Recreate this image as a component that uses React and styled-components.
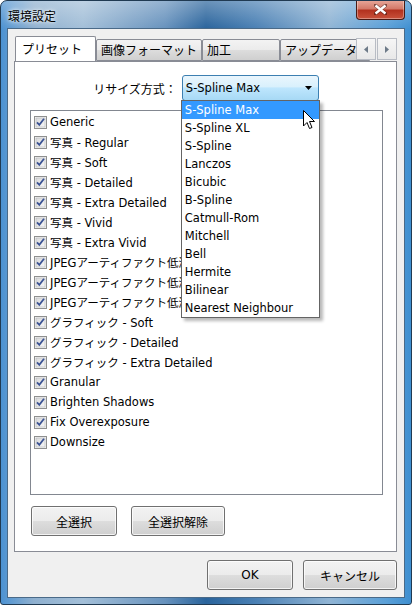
import React from "react";
import styled, { createGlobalStyle } from "styled-components";

const GlobalStyle = createGlobalStyle`
  html, body {
    margin: 0;
    padding: 0;
    background: #ffffff;
  }
  body {
    font-family: "DejaVu Sans", "Noto Sans CJK JP", sans-serif;
    font-size: 11.5px;
  }
`;

const Window = styled.div`
  box-sizing: border-box;
  width: 412px;
  height: 605px;
  border: 1px solid #203a52;
  border-radius: 7px 7px 3px 3px;
  padding: 0 6px 6px 6px;
  display: flex;
  flex-direction: column;
  background:
    linear-gradient(180deg, rgba(255,255,255,0.3) 0%, rgba(255,255,255,0) 28px),
    linear-gradient(90deg, #4c92d2 0%, #8fb0cf 8%, #a3bfd8 20%, #6792bd 40%, #2a649c 50%, #4a80b4 62%, #90b4d4 80%, #5aa0d8 94%, #3f8fd0 100%);
  overflow: hidden;
`;

const TitleBar = styled.div`
  height: 27px;
  display: flex;
  align-items: flex-start;
  justify-content: space-between;
  flex-shrink: 0;
`;

const Title = styled.span`
  margin: 8px 0 0 1px;
  font-family: "Noto Sans CJK JP", sans-serif;
  font-size: 12px;
  line-height: 14px;
  color: #000;
  text-shadow: 0 0 6px rgba(255,255,255,0.9), 0 0 3px rgba(255,255,255,0.9);
`;

const CloseButton = styled.div`
  width: 47px;
  height: 19px;
  margin-top: -1px;
  border: 1px solid #4a1a14;
  border-top: none;
  border-radius: 0 0 4px 4px;
  background: linear-gradient(180deg, #e9a99c 0%, #d47a6a 45%, #b3321f 55%, #c9523b 100%);
  box-shadow: inset 0 0 0 1px rgba(255,255,255,0.35);
  display: flex;
  align-items: center;
  justify-content: center;
`;

const Client = styled.div`
  flex: 1;
  display: flex;
  flex-direction: column;
  border: 1px solid #4a6a88;
  background: #f0f0f0;
`;

const TabControl = styled.div`
  margin: 7px 7px 0 6px;
  display: flex;
  flex-direction: column;
`;

const TabStrip = styled.div`
  position: relative;
  height: 25px;
  display: flex;
  align-items: flex-end;
  overflow: hidden;
`;

const Tab = styled.div`
  box-sizing: border-box;
  flex-shrink: 0;
  height: ${(p) => (p.$active ? "26px" : "22px")};
  width: ${(p) => p.$w}px;
  margin-left: ${(p) => (p.$active ? "1px" : "0")};
  margin-bottom: ${(p) => (p.$active ? "-1px" : "0")};
  border: 1px solid #898c95;
  border-bottom: ${(p) => (p.$active ? "none" : "1px solid #898c95")};
  border-radius: 2px 2px 0 0;
  background: ${(p) =>
    p.$active ? "#ffffff" : "linear-gradient(180deg, #f3f3f3 0%, #ebebeb 50%, #dddddd 51%, #cfcfcf 100%)"};
  padding: ${(p) => (p.$active ? "4px 0 0 6px" : "2px 0 0 4px")};
  font-family: "Noto Sans CJK JP", sans-serif;
  font-size: 12px;
  line-height: 16px;
  white-space: nowrap;
  overflow: hidden;
  color: #000;
  position: relative;
  z-index: ${(p) => (p.$active ? 1 : 0)};
`;

const ScrollButtons = styled.div`
  position: absolute;
  right: 0;
  top: 2px;
  display: flex;
  gap: 1px;
  z-index: 2;
`;

const ScrollButton = styled.div`
  box-sizing: border-box;
  width: 20px;
  height: 22px;
  border: 1px solid #b8bcc4;
  background: linear-gradient(180deg, #f6f6f6 0%, #e8e8e8 100%);
  display: flex;
  align-items: center;
  justify-content: center;
`;

const Panel = styled.div`
  box-sizing: border-box;
  height: 491px;
  border: 1px solid #898c95;
  background: #ffffff;
  display: flex;
  flex-direction: column;
  padding: 13px 13px 0 15px;
`;

const ResizeRow = styled.div`
  display: flex;
  justify-content: center;
  align-items: center;
  gap: 5px;
  margin-left: -1px;
`;

const Label = styled.span`
  font-family: "Noto Sans CJK JP", sans-serif;
  font-size: 12px;
  color: #000;
`;

const ComboWrap = styled.div`
  position: relative;
`;

const Combo = styled.div`
  box-sizing: border-box;
  width: 137px;
  height: 26px;
  border: 1px solid #3c7fb1;
  border-radius: 3px;
  background: linear-gradient(180deg, #eaf6fd 0%, #d9f0fc 45%, #bee6fd 50%, #a7d9f5 100%);
  display: flex;
  align-items: center;
  justify-content: space-between;
  padding: 0 6px 0 3px;
  color: #000;
`;

const Dropdown = styled.div`
  position: absolute;
  top: 25px;
  left: -1px;
  width: 139px;
  box-sizing: border-box;
  border: 1px solid #646464;
  background: #ffffff;
  box-shadow: 3px 3px 3px rgba(0, 0, 0, 0.28);
  z-index: 5;
`;

const Option = styled.div`
  height: 18px;
  line-height: 18px;
  padding-left: 3px;
  white-space: nowrap;
  background: ${(p) => (p.$selected ? "#3399ff" : "transparent")};
  color: ${(p) => (p.$selected ? "#ffffff" : "#000000")};
`;

const Cursor = styled.svg`
  position: absolute;
  left: 121px;
  top: 9px;
`;

const ListBox = styled.div`
  box-sizing: border-box;
  width: 353px;
  height: 385px;
  margin-top: 9px;
  border: 1px solid #828790;
  padding: 1px 0 0 3px;
  display: flex;
  flex-direction: column;
`;

const Item = styled.div`
  height: 20px;
  display: flex;
  align-items: center;
  gap: 3px;
  white-space: nowrap;
  color: #000;
`;

const ButtonRow = styled.div`
  display: flex;
  gap: 14px;
  margin-top: 11px;
  padding-left: 1px;
`;

const Button = styled.div`
  box-sizing: border-box;
  width: ${(p) => p.$w}px;
  height: 30px;
  border: 1px solid #707070;
  border-radius: 3px;
  background: linear-gradient(180deg, #f2f2f2 0%, #ebebeb 50%, #dddddd 51%, #cfcfcf 100%);
  box-shadow: inset 0 0 0 1px rgba(255, 255, 255, 0.75);
  display: flex;
  align-items: center;
  justify-content: center;
  font-family: "DejaVu Sans", "Noto Sans CJK JP", sans-serif;
  font-size: 12px;
  color: #000;
`;

const Footer = styled.div`
  display: flex;
  justify-content: flex-end;
  gap: 10px;
  margin: 8px 7px 0 0;
`;

const tabs = [
  { label: "プリセット", w: 81, active: true },
  { label: "画像フォーマット", w: 106 },
  { label: "加工", w: 78 },
  { label: "アップデータ", w: 90 },
];

const items = [
  "Generic",
  "写真 - Regular",
  "写真 - Soft",
  "写真 - Detailed",
  "写真 - Extra Detailed",
  "写真 - Vivid",
  "写真 - Extra Vivid",
  "JPEGアーティファクト低減 - Soft",
  "JPEGアーティファクト低減 - Regular",
  "JPEGアーティファクト低減 - Strong",
  "グラフィック - Soft",
  "グラフィック - Detailed",
  "グラフィック - Extra Detailed",
  "Granular",
  "Brighten Shadows",
  "Fix Overexposure",
  "Downsize",
];

const options = [
  "S-Spline Max",
  "S-Spline XL",
  "S-Spline",
  "Lanczos",
  "Bicubic",
  "B-Spline",
  "Catmull-Rom",
  "Mitchell",
  "Bell",
  "Hermite",
  "Bilinear",
  "Nearest Neighbour",
];

function CheckBox() {
  return (
    <svg width="13" height="13" viewBox="0 0 13 13">
      <defs>
        <linearGradient id="cbfill" x1="0" y1="0" x2="1" y2="1">
          <stop offset="0" stopColor="#d8d9db" />
          <stop offset="1" stopColor="#f7f7f7" />
        </linearGradient>
      </defs>
      <rect x="0.5" y="0.5" width="12" height="12" fill="#f4f4f4" stroke="#8e8f8f" />
      <rect x="2" y="2" width="9" height="9" fill="url(#cbfill)" stroke="#b2b4b8" strokeWidth="0.6" />
      <path d="M3 6.3 L5.3 8.8 L10 2.8" fill="none" stroke="#3b5394" strokeWidth="1.8" />
    </svg>
  );
}

function Arrow({ dir }) {
  return (
    <svg width="4" height="7" viewBox="0 0 4 7">
      {dir === "left" ? (
        <path d="M4 0 L0 3.5 L4 7 Z" fill="#6d7a88" />
      ) : (
        <path d="M0 0 L4 3.5 L0 7 Z" fill="#6d7a88" />
      )}
    </svg>
  );
}

export default function App() {
  return (
    <>
      <GlobalStyle />
      <Window>
        <TitleBar>
          <Title>環境設定</Title>
          <CloseButton>
            <svg width="13" height="11" viewBox="0 0 13 11">
              <path
                d="M1 1 L12 10 M12 1 L1 10"
                stroke="#3a1610"
                strokeWidth="3.6"
                strokeLinecap="square"
                opacity="0.55"
              />
              <path d="M1.5 1.5 L11.5 9.5 M11.5 1.5 L1.5 9.5" stroke="#ffffff" strokeWidth="2.4" />
            </svg>
          </CloseButton>
        </TitleBar>
        <Client>
          <TabControl>
            <TabStrip>
              {tabs.map((t) => (
                <Tab key={t.label} $active={t.active} $w={t.w}>
                  {t.label}
                </Tab>
              ))}
              <ScrollButtons>
                <ScrollButton>
                  <Arrow dir="left" />
                </ScrollButton>
                <ScrollButton>
                  <Arrow dir="right" />
                </ScrollButton>
              </ScrollButtons>
            </TabStrip>
            <Panel>
              <ResizeRow>
                <Label>リサイズ方式：</Label>
                <ComboWrap>
                  <Combo>
                    <span>S-Spline Max</span>
                    <svg width="7" height="4" viewBox="0 0 7 4">
                      <path d="M0 0 L7 0 L3.5 4 Z" fill="#000" />
                    </svg>
                  </Combo>
                  <Dropdown>
                    {options.map((o, i) => (
                      <Option key={o} $selected={i === 0}>
                        {o}
                      </Option>
                    ))}
                    <Cursor width="13" height="20" viewBox="0 0 13 20">
                      <path
                        d="M0.5 0.5 L0.5 16 L4 12.5 L6.5 18.5 L9 17.5 L6.5 11.5 L11.5 11.5 Z"
                        fill="#ffffff"
                        stroke="#000000"
                        strokeWidth="1"
                        strokeLinejoin="round"
                      />
                    </Cursor>
                  </Dropdown>
                </ComboWrap>
              </ResizeRow>
              <ListBox>
                {items.map((it) => (
                  <Item key={it}>
                    <CheckBox />
                    <span>{it}</span>
                  </Item>
                ))}
              </ListBox>
              <ButtonRow>
                <Button $w={86}>全選択</Button>
                <Button $w={94}>全選択解除</Button>
              </ButtonRow>
            </Panel>
          </TabControl>
          <Footer>
            <Button $w={86}>OK</Button>
            <Button $w={94}>キャンセル</Button>
          </Footer>
        </Client>
      </Window>
    </>
  );
}
